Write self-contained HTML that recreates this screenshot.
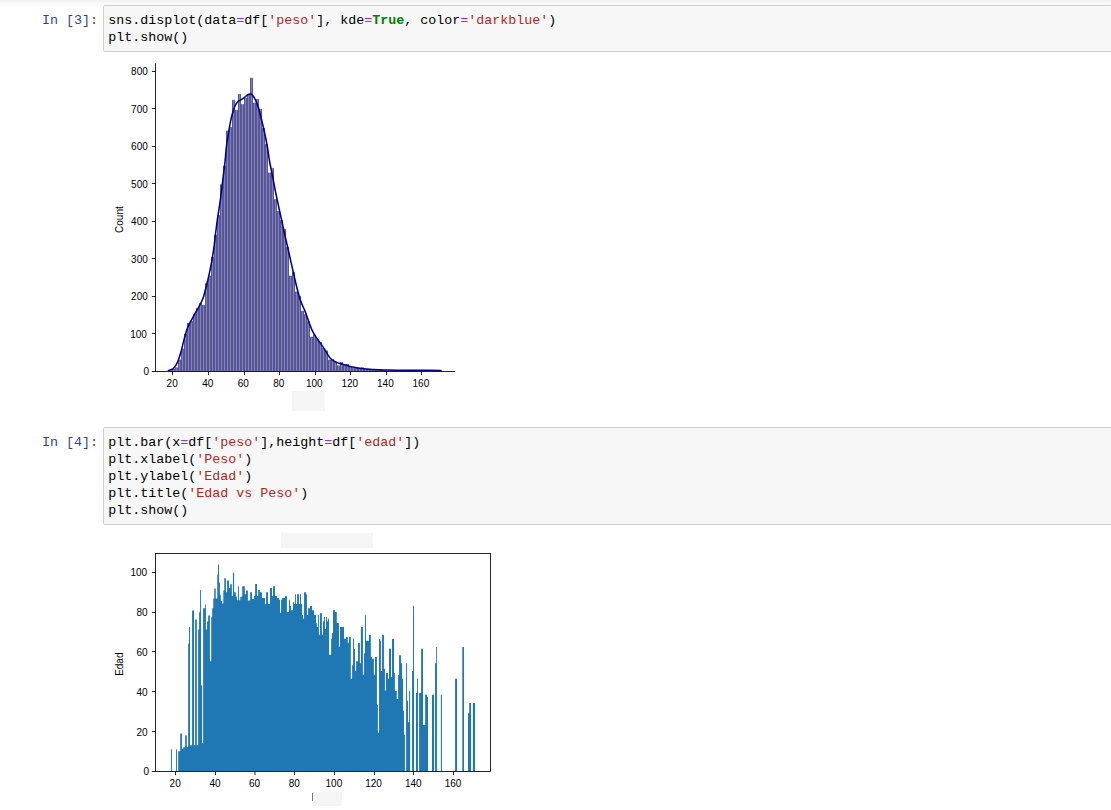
<!DOCTYPE html>
<html><head><meta charset="utf-8"><title>notebook</title>
<style>
html,body{margin:0;padding:0;background:#fff;}
body{width:1111px;height:810px;position:relative;overflow:hidden;font-family:"Liberation Sans",sans-serif;}
.box{position:absolute;left:103px;width:1100px;box-sizing:border-box;border:1px solid #cfcfcf;border-radius:2px;background:#f7f7f7;}
.box pre,.prompt{font-family:"Liberation Mono",monospace;font-size:13.33px;line-height:17px;margin:0;}
.box pre{position:absolute;left:4.3px;top:5.5px;color:#000;white-space:pre;}
.prompt{position:absolute;left:0;width:98px;text-align:right;color:#303f9f;white-space:pre;}
.s{color:#ba2121}.o{color:#aa22ff}.k{color:#008000;font-weight:bold}
.g{position:absolute;background:#f5f5f5;}
svg{position:absolute;left:0;top:0;}
svg text{font-family:"Liberation Sans","DejaVu Sans",sans-serif;font-size:10px;fill:#000;}
</style></head><body>
<div style="position:absolute;left:0;top:0;width:1111px;height:8px;background:linear-gradient(#f0f0f0,#f6f6f6 25%,#fbfbfb 60%,#fff)"></div>
<div class="prompt" style="top:11.5px">In [3]:</div><div class="box" style="top:5px;height:47px"><pre>sns.displot(data<span class="o">=</span>df[<span class="s">'peso'</span>], kde<span class="o">=</span><span class="k">True</span>, color<span class="o">=</span><span class="s">'darkblue'</span>)
plt.show()</pre></div>
<div class="prompt" style="top:433.5px">In [4]:</div><div class="box" style="top:427px;height:98px"><pre>plt.bar(x<span class="o">=</span>df[<span class="s">'peso'</span>],height<span class="o">=</span>df[<span class="s">'edad'</span>])
plt.xlabel(<span class="s">'Peso'</span>)
plt.ylabel(<span class="s">'Edad'</span>)
plt.title(<span class="s">'Edad vs Peso'</span>)
plt.show()</pre></div>
<div class="g" style="left:292px;top:391px;width:33.3px;height:20.2px"></div>
<div class="g" style="left:281.4px;top:532.6px;width:91.4px;height:15.1px"></div>
<div class="g" style="left:312.7px;top:791.8px;width:29.5px;height:14.5px"></div>
<div style="position:absolute;left:312px;top:793px;width:1px;height:7.6px;background:#777"></div>
<svg width="1111" height="810" viewBox="0 0 1111 810">
<path d="M169.0 371.20V370.40H172.0V371.20ZM172.0 371.20V369.30H175.0V371.20ZM175.0 371.20V367.80H178.0V371.20ZM178.0 371.20V359.90H181.0V371.20ZM181.0 371.20V349.00H184.0V371.20ZM184.0 371.20V334.20H187.0V371.20ZM187.0 371.20V323.30H190.0V371.20ZM190.0 371.20V321.30H193.0V371.20ZM193.0 371.20V314.40H196.0V371.20ZM196.0 371.20V308.40H199.0V371.20ZM199.0 371.20V303.50H202.0V371.20ZM202.0 371.20V305.30H205.0V371.20ZM205.0 371.20V283.50H208.0V371.20ZM208.0 371.20V276.10H211.0V371.20ZM211.0 371.20V257.30H214.0V371.20ZM214.0 371.20V235.20H217.0V371.20ZM217.0 371.20V215.40H220.0V371.20ZM220.0 371.20V184.80H223.0V371.20ZM223.0 371.20V166.00H226.0V371.20ZM226.0 371.20V131.00H229.0V371.20ZM229.0 371.20V127.50H232.0V371.20ZM232.0 371.20V100.20H235.0V371.20ZM235.0 371.20V110.20H238.0V371.20ZM238.0 371.20V94.30H241.0V371.20ZM241.0 371.20V104.40H244.0V371.20ZM244.0 371.20V98.30H247.0V371.20ZM247.0 371.20V95.30H250.0V371.20ZM250.0 371.20V78.20H253.0V371.20ZM253.0 371.20V103.10H256.0V371.20ZM256.0 371.20V99.60H259.0V371.20ZM259.0 371.20V109.30H262.0V371.20ZM262.0 371.20V128.60H265.0V371.20ZM265.0 371.20V144.40H268.0V371.20ZM268.0 371.20V172.90H271.0V371.20ZM271.0 371.20V168.40H274.0V371.20ZM274.0 371.20V199.60H277.0V371.20ZM277.0 371.20V211.50H280.0V371.20ZM280.0 371.20V220.40H283.0V371.20ZM283.0 371.20V229.30H286.0V371.20ZM286.0 371.20V247.40H289.0V371.20ZM289.0 371.20V276.10H292.0V371.20ZM292.0 371.20V272.40H295.0V371.20ZM295.0 371.20V291.90H298.0V371.20ZM298.0 371.20V296.40H301.0V371.20ZM301.0 371.20V311.20H304.0V371.20ZM304.0 371.20V314.70H307.0V371.20ZM307.0 371.20V321.80H310.0V371.20ZM310.0 371.20V337.10H313.0V371.20ZM313.0 371.20V335.10H316.0V371.20ZM316.0 371.20V339.60H319.0V371.20ZM319.0 371.20V342.60H322.0V371.20ZM322.0 371.20V348.50H325.0V371.20ZM325.0 371.20V351.00H328.0V371.20ZM328.0 371.20V359.90H331.0V371.20ZM331.0 371.20V359.40H334.0V371.20ZM334.0 371.20V361.90H337.0V371.20ZM337.0 371.20V365.80H340.0V371.20ZM340.0 371.20V362.60H343.0V371.20ZM343.0 371.20V365.30H346.0V371.20ZM346.0 371.20V364.60H349.0V371.20ZM349.0 371.20V366.50H352.0V371.20ZM352.0 371.20V368.50H355.0V371.20ZM355.0 371.20V367.80H358.0V371.20ZM358.0 371.20V368.10H361.0V371.20ZM361.0 371.20V367.80H364.0V371.20ZM364.0 371.20V369.33H367.0V371.20ZM367.0 371.20V369.33H370.0V371.20ZM370.0 371.20V369.70H373.0V371.20ZM373.0 371.20V369.70H376.0V371.20ZM376.0 371.20V370.08H379.0V371.20ZM379.0 371.20V370.08H382.0V371.20ZM382.0 371.20V370.08H385.0V371.20ZM385.0 371.20V370.45H388.0V371.20ZM388.0 371.20V370.45H391.0V371.20ZM391.0 371.20V370.45H394.0V371.20ZM394.0 371.20V370.45H397.0V371.20ZM397.0 371.20V370.83H400.0V371.20ZM400.0 371.20V370.83H403.0V371.20ZM403.0 371.20V370.45H406.0V371.20ZM406.0 371.20V370.83H409.0V371.20ZM409.0 371.20V370.83H412.0V371.20ZM412.0 371.20V370.83H415.0V371.20ZM415.0 371.20V370.83H418.0V371.20ZM421.0 371.20V370.83H424.0V371.20ZM424.0 371.20V370.83H427.0V371.20ZM433.0 371.20V370.83H436.0V371.20ZM439.0 371.20V370.83H442.0V371.20Z" fill="#8080c5"/>
<path d="M169 371.20V370.40H170V371.20ZM171 371.20V370.40H173V371.20ZM172 370.40V369.30H173V370.40ZM174 371.20V369.30H176V371.20ZM175 369.30V367.80H176V369.30ZM177 371.20V367.80H179V371.20ZM178 367.80V359.90H179V367.80ZM180 371.20V359.90H182V371.20ZM181 359.90V349.00H182V359.90ZM183 371.20V349.00H185V371.20ZM184 349.00V334.20H185V349.00ZM186 371.20V334.20H188V371.20ZM187 334.20V323.30H188V334.20ZM189 371.20V323.30H191V371.20ZM190 323.30V321.30H191V323.30ZM192 371.20V321.30H194V371.20ZM193 321.30V314.40H194V321.30ZM195 371.20V314.40H197V371.20ZM196 314.40V308.40H197V314.40ZM198 371.20V308.40H200V371.20ZM199 308.40V303.50H200V308.40ZM201 371.20V305.30H203V371.20ZM201 305.30V303.50H202V305.30ZM204 371.20V305.30H206V371.20ZM205 305.30V283.50H206V305.30ZM207 371.20V283.50H209V371.20ZM208 283.50V276.10H209V283.50ZM210 371.20V276.10H212V371.20ZM211 276.10V257.30H212V276.10ZM213 371.20V257.30H215V371.20ZM214 257.30V235.20H215V257.30ZM216 371.20V235.20H218V371.20ZM217 235.20V215.40H218V235.20ZM219 371.20V215.40H221V371.20ZM220 215.40V184.80H221V215.40ZM222 371.20V184.80H224V371.20ZM223 184.80V166.00H224V184.80ZM225 371.20V166.00H227V371.20ZM226 166.00V131.00H227V166.00ZM228 371.20V131.00H230V371.20ZM229 131.00V127.50H230V131.00ZM231 371.20V127.50H233V371.20ZM232 127.50V100.20H233V127.50ZM234 371.20V110.20H236V371.20ZM234 110.20V100.20H235V110.20ZM237 371.20V110.20H239V371.20ZM238 110.20V94.30H239V110.20ZM240 371.20V104.40H242V371.20ZM240 104.40V94.30H241V104.40ZM243 371.20V104.40H245V371.20ZM244 104.40V98.30H245V104.40ZM246 371.20V98.30H248V371.20ZM247 98.30V95.30H248V98.30ZM249 371.20V95.30H251V371.20ZM250 95.30V78.20H251V95.30ZM252 371.20V103.10H254V371.20ZM252 103.10V78.20H253V103.10ZM255 371.20V103.10H257V371.20ZM256 103.10V99.60H257V103.10ZM258 371.20V109.30H260V371.20ZM258 109.30V99.60H259V109.30ZM261 371.20V128.60H263V371.20ZM261 128.60V109.30H262V128.60ZM264 371.20V144.40H266V371.20ZM264 144.40V128.60H265V144.40ZM267 371.20V172.90H269V371.20ZM267 172.90V144.40H268V172.90ZM270 371.20V172.90H272V371.20ZM271 172.90V168.40H272V172.90ZM273 371.20V199.60H275V371.20ZM273 199.60V168.40H274V199.60ZM276 371.20V211.50H278V371.20ZM276 211.50V199.60H277V211.50ZM279 371.20V220.40H281V371.20ZM279 220.40V211.50H280V220.40ZM282 371.20V229.30H284V371.20ZM282 229.30V220.40H283V229.30ZM285 371.20V247.40H287V371.20ZM285 247.40V229.30H286V247.40ZM288 371.20V276.10H290V371.20ZM288 276.10V247.40H289V276.10ZM291 371.20V276.10H293V371.20ZM292 276.10V272.40H293V276.10ZM294 371.20V291.90H296V371.20ZM294 291.90V272.40H295V291.90ZM297 371.20V296.40H299V371.20ZM297 296.40V291.90H298V296.40ZM300 371.20V311.20H302V371.20ZM300 311.20V296.40H301V311.20ZM303 371.20V314.70H305V371.20ZM303 314.70V311.20H304V314.70ZM306 371.20V321.80H308V371.20ZM306 321.80V314.70H307V321.80ZM309 371.20V337.10H311V371.20ZM309 337.10V321.80H310V337.10ZM312 371.20V337.10H314V371.20ZM313 337.10V335.10H314V337.10ZM315 371.20V339.60H317V371.20ZM315 339.60V335.10H316V339.60ZM318 371.20V342.60H320V371.20ZM318 342.60V339.60H319V342.60ZM321 371.20V348.50H323V371.20ZM321 348.50V342.60H322V348.50ZM324 371.20V351.00H326V371.20ZM324 351.00V348.50H325V351.00ZM327 371.20V359.90H329V371.20ZM327 359.90V351.00H328V359.90ZM330 371.20V359.90H332V371.20ZM331 359.90V359.40H332V359.90ZM333 371.20V361.90H335V371.20ZM333 361.90V359.40H334V361.90ZM336 371.20V365.80H338V371.20ZM336 365.80V361.90H337V365.80ZM339 371.20V365.80H341V371.20ZM340 365.80V362.60H341V365.80ZM342 371.20V365.30H344V371.20ZM342 365.30V362.60H343V365.30ZM345 371.20V365.30H347V371.20ZM346 365.30V364.60H347V365.30ZM348 371.20V366.50H350V371.20ZM348 366.50V364.60H349V366.50ZM351 371.20V368.50H353V371.20ZM351 368.50V366.50H352V368.50ZM354 371.20V368.50H356V371.20ZM355 368.50V367.80H356V368.50ZM357 371.20V368.10H359V371.20ZM357 368.10V367.80H358V368.10ZM360 371.20V368.10H362V371.20ZM361 368.10V367.80H362V368.10ZM363 371.20V369.33H365V371.20ZM363 369.33V367.80H364V369.33ZM366 371.20V369.33H368V371.20ZM369 371.20V369.70H371V371.20ZM369 369.70V369.33H370V369.70ZM372 371.20V369.70H374V371.20ZM375 371.20V370.08H377V371.20ZM375 370.08V369.70H376V370.08ZM378 371.20V370.08H380V371.20ZM381 371.20V370.08H383V371.20ZM384 371.20V370.45H386V371.20ZM384 370.45V370.08H385V370.45ZM387 371.20V370.45H389V371.20ZM390 371.20V370.45H392V371.20ZM393 371.20V370.45H395V371.20ZM396 371.20V370.83H398V371.20ZM396 370.83V370.45H397V370.83ZM399 371.20V370.83H401V371.20ZM402 371.20V370.83H404V371.20ZM403 370.83V370.45H404V370.83ZM405 371.20V370.83H407V371.20ZM405 370.83V370.45H406V370.83ZM408 371.20V370.83H410V371.20ZM411 371.20V370.83H413V371.20ZM414 371.20V370.83H416V371.20ZM417 371.20V370.83H418V371.20ZM421 371.20V370.83H422V371.20ZM423 371.20V370.83H425V371.20ZM426 371.20V370.83H427V371.20ZM433 371.20V370.83H434V371.20ZM435 371.20V370.83H436V371.20ZM439 371.20V370.83H440V371.20ZM441 371.20V370.83H442V371.20Z" fill="#58588e"/>
<path d="M172.0 369.30H175.0M175.0 367.80H178.0M178.0 359.90H181.0M181.0 349.00H184.0M184.0 334.20H187.0M187.0 323.30H190.0M190.0 321.30H193.0M193.0 314.40H196.0M196.0 308.40H199.0M199.0 303.50H202.0M202.0 305.30H205.0M205.0 283.50H208.0M208.0 276.10H211.0M211.0 257.30H214.0M214.0 235.20H217.0M217.0 215.40H220.0M220.0 184.80H223.0M223.0 166.00H226.0M226.0 131.00H229.0M229.0 127.50H232.0M232.0 100.20H235.0M235.0 110.20H238.0M238.0 94.30H241.0M241.0 104.40H244.0M244.0 98.30H247.0M247.0 95.30H250.0M250.0 78.20H253.0M253.0 103.10H256.0M256.0 99.60H259.0M259.0 109.30H262.0M262.0 128.60H265.0M265.0 144.40H268.0M268.0 172.90H271.0M271.0 168.40H274.0M274.0 199.60H277.0M277.0 211.50H280.0M280.0 220.40H283.0M283.0 229.30H286.0M286.0 247.40H289.0M289.0 276.10H292.0M292.0 272.40H295.0M295.0 291.90H298.0M298.0 296.40H301.0M301.0 311.20H304.0M304.0 314.70H307.0M307.0 321.80H310.0M310.0 337.10H313.0M313.0 335.10H316.0M316.0 339.60H319.0M319.0 342.60H322.0M322.0 348.50H325.0M325.0 351.00H328.0M328.0 359.90H331.0M331.0 359.40H334.0M334.0 361.90H337.0M337.0 365.80H340.0M340.0 362.60H343.0M343.0 365.30H346.0M346.0 364.60H349.0M349.0 366.50H352.0M352.0 368.50H355.0M355.0 367.80H358.0M358.0 368.10H361.0M361.0 367.80H364.0M364.0 369.33H367.0M367.0 369.33H370.0M370.0 369.70H373.0M373.0 369.70H376.0M376.0 370.08H379.0M379.0 370.08H382.0M382.0 370.08H385.0" stroke="#58588e" stroke-width="0.6" fill="none"/>
<path d="M168.40 370.50C169.15 370.22 171.67 369.67 172.90 368.80C174.13 367.93 174.90 366.70 175.80 365.30C176.70 363.90 177.47 362.53 178.30 360.40C179.13 358.27 180.05 355.13 180.80 352.50C181.55 349.87 182.13 347.25 182.80 344.60C183.47 341.95 184.07 339.25 184.80 336.60C185.53 333.95 186.38 330.92 187.20 328.70C188.02 326.48 188.78 325.12 189.70 323.30C190.62 321.48 191.72 319.62 192.70 317.80C193.68 315.98 194.62 314.13 195.60 312.40C196.58 310.67 197.60 309.22 198.60 307.40C199.60 305.58 200.77 303.33 201.60 301.50C202.43 299.67 202.78 299.07 203.60 296.40C204.42 293.73 205.52 289.47 206.50 285.50C207.48 281.53 208.58 276.88 209.50 272.60C210.42 268.32 211.25 264.08 212.00 259.80C212.75 255.52 213.43 251.03 214.00 246.90C214.57 242.77 214.83 239.58 215.40 235.00C215.97 230.42 216.57 225.30 217.40 219.40C218.23 213.50 219.40 207.02 220.40 199.60C221.40 192.18 222.63 181.17 223.40 174.90C224.17 168.63 224.45 167.08 225.00 162.00C225.55 156.92 226.00 149.97 226.70 144.40C227.40 138.83 228.30 133.55 229.20 128.60C230.10 123.65 231.12 118.50 232.10 114.70C233.08 110.90 234.10 108.03 235.10 105.80C236.10 103.57 237.12 102.28 238.10 101.30C239.08 100.32 239.93 100.55 241.00 99.90C242.07 99.25 243.42 98.23 244.50 97.40C245.58 96.57 246.58 95.48 247.50 94.90C248.42 94.32 249.18 93.90 250.00 93.90C250.82 93.90 251.50 93.90 252.40 94.90C253.30 95.90 254.40 97.75 255.40 99.90C256.40 102.05 257.42 104.67 258.40 107.80C259.38 110.93 260.32 114.75 261.30 118.70C262.28 122.65 263.30 126.88 264.30 131.50C265.30 136.12 266.43 141.48 267.30 146.40C268.17 151.32 268.67 156.25 269.50 161.00C270.33 165.75 271.27 169.62 272.30 174.90C273.33 180.18 274.47 186.60 275.70 192.70C276.93 198.80 278.45 205.73 279.70 211.50C280.95 217.27 282.23 222.88 283.20 227.30C284.17 231.72 284.58 233.92 285.50 238.00C286.42 242.08 287.50 246.52 288.70 251.80C289.90 257.08 291.38 263.92 292.70 269.70C294.02 275.48 295.30 281.35 296.60 286.50C297.90 291.65 299.12 296.53 300.50 300.60C301.88 304.67 303.52 307.37 304.90 310.90C306.28 314.43 307.48 318.33 308.80 321.80C310.12 325.27 311.48 328.98 312.80 331.70C314.12 334.42 315.38 336.12 316.70 338.10C318.02 340.08 319.37 341.70 320.70 343.60C322.03 345.50 323.22 347.20 324.70 349.50C326.18 351.80 327.95 355.42 329.60 357.40C331.25 359.38 332.95 360.40 334.60 361.40C336.25 362.40 337.70 362.82 339.50 363.40C341.30 363.98 343.42 364.33 345.40 364.90C347.38 365.47 349.08 366.23 351.40 366.80C353.72 367.37 356.33 367.88 359.30 368.30C362.27 368.72 365.90 369.05 369.20 369.30C372.50 369.55 375.80 369.67 379.10 369.80C382.40 369.93 385.52 370.03 389.00 370.10C392.48 370.17 394.83 370.17 400.00 370.20C405.17 370.23 413.17 370.27 420.00 370.30C426.83 370.33 437.50 370.38 441.00 370.40" fill="none" stroke="#00008b" stroke-width="1.55" stroke-linejoin="round" stroke-linecap="round"/>
<path d="M155.50 63.20L155.50 371.90" stroke="#000" stroke-width="0.85" fill="none"/>
<path d="M155.10 371.50L455.00 371.50" stroke="#000" stroke-width="0.85" fill="none"/>
<path d="M172.50 371.50L172.50 375.10" stroke="#000" stroke-width="0.85" fill="none"/>
<text x="172.18" y="386.70" text-anchor="middle">20</text>
<path d="M208.50 371.50L208.50 375.10" stroke="#000" stroke-width="0.85" fill="none"/>
<text x="207.87" y="386.70" text-anchor="middle">40</text>
<path d="M244.50 371.50L244.50 375.10" stroke="#000" stroke-width="0.85" fill="none"/>
<text x="243.32" y="386.70" text-anchor="middle">60</text>
<path d="M279.50 371.50L279.50 375.10" stroke="#000" stroke-width="0.85" fill="none"/>
<text x="278.89" y="386.70" text-anchor="middle">80</text>
<path d="M315.50 371.50L315.50 375.10" stroke="#000" stroke-width="0.85" fill="none"/>
<text x="314.24" y="386.70" text-anchor="middle">100</text>
<path d="M350.50 371.50L350.50 375.10" stroke="#000" stroke-width="0.85" fill="none"/>
<text x="349.80" y="386.70" text-anchor="middle">120</text>
<path d="M386.50 371.50L386.50 375.10" stroke="#000" stroke-width="0.85" fill="none"/>
<text x="385.36" y="386.70" text-anchor="middle">140</text>
<path d="M421.50 371.50L421.50 375.10" stroke="#000" stroke-width="0.85" fill="none"/>
<text x="420.92" y="386.70" text-anchor="middle">160</text>
<path d="M151.90 371.50L155.50 371.50" stroke="#000" stroke-width="0.85" fill="none"/>
<text x="149.00" y="375.35" text-anchor="end">0</text>
<path d="M151.90 333.50L155.50 333.50" stroke="#000" stroke-width="0.85" fill="none"/>
<text x="146.90" y="337.86" text-anchor="end">100</text>
<path d="M151.90 296.50L155.50 296.50" stroke="#000" stroke-width="0.85" fill="none"/>
<text x="147.80" y="300.37" text-anchor="end">200</text>
<path d="M151.90 258.50L155.50 258.50" stroke="#000" stroke-width="0.85" fill="none"/>
<text x="147.80" y="262.88" text-anchor="end">300</text>
<path d="M151.90 221.50L155.50 221.50" stroke="#000" stroke-width="0.85" fill="none"/>
<text x="147.80" y="225.39" text-anchor="end">400</text>
<path d="M151.90 183.50L155.50 183.50" stroke="#000" stroke-width="0.85" fill="none"/>
<text x="147.80" y="187.90" text-anchor="end">500</text>
<path d="M151.90 146.50L155.50 146.50" stroke="#000" stroke-width="0.85" fill="none"/>
<text x="147.80" y="150.41" text-anchor="end">600</text>
<path d="M151.90 108.50L155.50 108.50" stroke="#000" stroke-width="0.85" fill="none"/>
<text x="147.80" y="112.92" text-anchor="end">700</text>
<path d="M151.90 71.50L155.50 71.50" stroke="#000" stroke-width="0.85" fill="none"/>
<text x="147.80" y="75.43" text-anchor="end">800</text>
<text transform="translate(122.75,219.60) rotate(-90)" text-anchor="middle">Count</text>
<path d="M170.91 771.25V749.35H171.89V771.25ZM176.05 771.25V749.35H176.96V771.25ZM178.17 771.25V751.34H180.21V771.25ZM180.21 771.25V733.42H181.95V771.25ZM181.95 771.25V748.75H183.23V771.25ZM183.23 771.25V747.36H185.12V771.25ZM185.12 771.25V735.41H186.79V771.25ZM186.79 771.25V746.96H188.15V771.25ZM188.15 771.25V643.43H189.05V771.25ZM189.05 771.25V627.10H190.04V771.25ZM190.04 771.25V745.17H192.08V771.25ZM192.08 771.25V610.38H194.04V771.25ZM194.04 771.25V745.17H195.10V771.25ZM195.10 771.25V619.54H196.84V771.25ZM196.84 771.25V745.17H198.13V771.25ZM198.13 771.25V629.49H199.11V771.25ZM199.11 771.25V612.37H200.09V771.25ZM200.09 771.25V590.07H201.00V771.25ZM201.00 771.25V685.24H202.13V771.25ZM202.13 771.25V743.18H203.12V771.25ZM203.12 771.25V608.19H205.16V771.25ZM205.16 771.25V604.40H205.91V771.25ZM205.91 771.25V629.49H207.05V771.25ZM207.05 771.25V621.53H208.18V771.25ZM208.18 771.25V615.55H209.92V771.25ZM209.92 771.25V661.15H211.21V771.25ZM211.21 771.25V617.35H212.19V771.25ZM212.19 771.25V608.19H213.25V771.25ZM213.25 771.25V598.43H214.23V771.25ZM214.23 771.25V588.48H215.74V771.25ZM215.74 771.25V598.43H217.26V771.25ZM217.26 771.25V574.54H218.01V771.25ZM218.01 771.25V564.39H218.99V771.25ZM218.99 771.25V582.50H219.90V771.25ZM219.90 771.25V594.65H220.81V771.25ZM220.81 771.25V601.02H222.17V771.25ZM222.17 771.25V603.61H223.30V771.25ZM223.30 771.25V590.47H224.29V771.25ZM224.29 771.25V578.32H225.95V771.25ZM225.95 771.25V592.26H227.08V771.25ZM227.08 771.25V580.51H228.97V771.25ZM228.97 771.25V588.08H230.11V771.25ZM230.11 771.25V584.30H231.85V771.25ZM231.85 771.25V596.04H232.91V771.25ZM232.91 771.25V572.55H234.12V771.25ZM234.12 771.25V592.26H235.78V771.25ZM235.78 771.25V596.44H236.91V771.25ZM236.91 771.25V600.22H238.05V771.25ZM238.05 771.25V586.29H238.96V771.25ZM238.96 771.25V600.22H240.32V771.25ZM240.32 771.25V596.64H242.21V771.25ZM242.21 771.25V586.29H244.85V771.25ZM244.85 771.25V594.25H245.99V771.25ZM245.99 771.25V590.47H247.88V771.25ZM247.88 771.25V600.42H250.15V771.25ZM250.15 771.25V592.26H252.04V771.25ZM252.04 771.25V599.03H254.00V771.25ZM254.00 771.25V596.04H255.13V771.25ZM255.13 771.25V584.10H257.02V771.25ZM257.02 771.25V596.04H258.16V771.25ZM258.16 771.25V590.07H259.90V771.25ZM259.90 771.25V592.26H261.94V771.25ZM261.94 771.25V598.03H264.96V771.25ZM264.96 771.25V604.01H266.10V771.25ZM266.10 771.25V592.26H267.99V771.25ZM267.99 771.25V604.01H270.03V771.25ZM270.03 771.25V588.08H271.99V771.25ZM271.99 771.25V596.04H273.05V771.25ZM273.05 771.25V586.29H275.02V771.25ZM275.02 771.25V596.04H277.06V771.25ZM277.06 771.25V598.03H278.95V771.25ZM278.95 771.25V599.82H280.08V771.25ZM280.08 771.25V612.77H281.07V771.25ZM281.07 771.25V599.82H282.13V771.25ZM282.13 771.25V598.03H285.00V771.25ZM285.00 771.25V596.04H286.89V771.25ZM286.89 771.25V611.97H288.93V771.25ZM288.93 771.25V599.82H289.91V771.25ZM289.91 771.25V606.00H291.05V771.25ZM291.05 771.25V610.18H292.94V771.25ZM292.94 771.25V602.21H294.07V771.25ZM294.07 771.25V604.01H295.06V771.25ZM295.06 771.25V594.25H295.96V771.25ZM295.96 771.25V604.01H297.10V771.25ZM297.10 771.25V594.25H298.99V771.25ZM298.99 771.25V604.01H299.97V771.25ZM299.97 771.25V594.25H301.03V771.25ZM301.03 771.25V604.01H302.01V771.25ZM302.01 771.25V614.96H302.99V771.25ZM302.99 771.25V618.74H304.05V771.25ZM304.05 771.25V592.26H306.02V771.25ZM306.02 771.25V594.25H306.93V771.25ZM306.93 771.25V614.96H308.06V771.25ZM308.06 771.25V608.19H309.95V771.25ZM309.95 771.25V606.00H312.07V771.25ZM312.07 771.25V610.18H314.11V771.25ZM314.11 771.25V614.96H316.00V771.25ZM316.00 771.25V623.32H316.91V771.25ZM316.91 771.25V627.10H317.89V771.25ZM317.89 771.25V614.96H318.87V771.25ZM318.87 771.25V634.67H319.93V771.25ZM319.93 771.25V613.16H321.90V771.25ZM321.90 771.25V634.67H322.96V771.25ZM322.96 771.25V621.13H323.94V771.25ZM323.94 771.25V616.95H324.92V771.25ZM324.92 771.25V629.09H325.98V771.25ZM325.98 771.25V616.95H326.96V771.25ZM326.96 771.25V621.13H327.95V771.25ZM327.95 771.25V618.74H329.00V771.25ZM329.00 771.25V654.78H331.12V771.25ZM331.12 771.25V638.85H331.88V771.25ZM331.88 771.25V633.07H333.01V771.25ZM333.01 771.25V610.18H335.05V771.25ZM335.05 771.25V611.97H336.79V771.25ZM336.79 771.25V622.92H338.00V771.25ZM338.00 771.25V622.92H338.95V771.25ZM338.95 771.25V646.81H340.00V771.25ZM340.00 771.25V627.10H344.01V771.25ZM344.01 771.25V638.85H345.90V771.25ZM345.90 771.25V637.06H347.79V771.25ZM347.79 771.25V642.63H348.93V771.25ZM348.93 771.25V637.06H350.82V771.25ZM350.82 771.25V678.87H352.10V771.25ZM352.10 771.25V665.33H353.08V771.25ZM353.08 771.25V638.85H354.07V771.25ZM354.07 771.25V649.00H354.97V771.25ZM354.97 771.25V670.90H356.11V771.25ZM356.11 771.25V661.15H358.00V771.25ZM358.00 771.25V643.03H359.89V771.25ZM359.89 771.25V663.14H360.87V771.25ZM360.87 771.25V627.10H362.91V771.25ZM362.91 771.25V674.69H364.05V771.25ZM364.05 771.25V653.18H364.96V771.25ZM364.96 771.25V615.16H365.94V771.25ZM365.94 771.25V640.64H368.96V771.25ZM368.96 771.25V635.07H370.85V771.25ZM370.85 771.25V656.97H371.99V771.25ZM371.99 771.25V658.76H373.88V771.25ZM373.88 771.25V674.69H375.01V771.25ZM375.01 771.25V656.97H376.00V771.25ZM376.00 771.25V656.97H376.91V771.25ZM376.91 771.25V704.95H377.89V771.25ZM377.89 771.25V732.82H379.02V771.25ZM379.02 771.25V639.05H380.16V771.25ZM380.16 771.25V640.84H380.91V771.25ZM380.91 771.25V670.90H382.05V771.25ZM382.05 771.25V634.87H383.94V771.25ZM383.94 771.25V669.11H384.92V771.25ZM384.92 771.25V690.61H385.98V771.25ZM385.98 771.25V672.89H387.95V771.25ZM387.95 771.25V678.87H389.00V771.25ZM389.00 771.25V648.80H390.97V771.25ZM390.97 771.25V677.08H392.03V771.25ZM392.03 771.25V639.05H393.99V771.25ZM393.99 771.25V672.89H394.90V771.25ZM394.90 771.25V691.01H396.79V771.25ZM396.79 771.25V698.98H398.08V771.25ZM398.08 771.25V675.08H399.06V771.25ZM399.06 771.25V655.17H400.95V771.25ZM400.95 771.25V663.14H402.08V771.25ZM402.08 771.25V678.87H403.07V771.25ZM403.07 771.25V710.72H403.98V771.25ZM403.98 771.25V734.81H404.96V771.25ZM406.09 771.25V663.14H407.00V771.25ZM407.00 771.25V700.77H407.98V771.25ZM407.98 771.25V722.27H409.12V771.25ZM409.12 771.25V691.01H410.10V771.25ZM412.07 771.25V670.90H413.05V771.25ZM413.05 771.25V605.80H414.03V771.25ZM416.00 771.25V693.00H417.06V771.25ZM417.06 771.25V678.87H417.96V771.25ZM419.10 771.25V693.00H421.14V771.25ZM421.14 771.25V648.80H423.03V771.25ZM423.03 771.25V725.06H425.15V771.25ZM425.15 771.25V694.80H427.04V771.25ZM427.04 771.25V696.99H428.02V771.25ZM432.03 771.25V694.80H434.07V771.25ZM435.05 771.25V663.14H436.11V771.25ZM436.11 771.25V647.01H436.94V771.25ZM440.87 771.25V694.80H441.93V771.25ZM455.09 771.25V678.87H457.05V771.25ZM462.30 771.25V647.01H464.00V771.25ZM468.00 771.25V713.31H469.20V771.25ZM469.20 771.25V702.96H471.00V771.25ZM472.90 771.25V702.96H475.00V771.25Z" fill="#1f77b4"/>
<rect x="155.5" y="553.5" width="335.00" height="218.00" fill="none" stroke="#000" stroke-width="0.85"/>
<path d="M175.50 771.50L175.50 775.10" stroke="#000" stroke-width="0.85" fill="none"/>
<text x="175.18" y="786.85" text-anchor="middle">20</text>
<path d="M215.50 771.50L215.50 775.10" stroke="#000" stroke-width="0.85" fill="none"/>
<text x="215.02" y="786.85" text-anchor="middle">40</text>
<path d="M255.00 771.50L255.00 775.10" stroke="#000" stroke-width="0.85" fill="none"/>
<text x="254.63" y="786.85" text-anchor="middle">60</text>
<path d="M294.50 771.50L294.50 775.10" stroke="#000" stroke-width="0.85" fill="none"/>
<text x="294.35" y="786.85" text-anchor="middle">80</text>
<path d="M334.50 771.50L334.50 775.10" stroke="#000" stroke-width="0.85" fill="none"/>
<text x="333.86" y="786.85" text-anchor="middle">100</text>
<path d="M374.50 771.50L374.50 775.10" stroke="#000" stroke-width="0.85" fill="none"/>
<text x="373.57" y="786.85" text-anchor="middle">120</text>
<path d="M413.50 771.50L413.50 775.10" stroke="#000" stroke-width="0.85" fill="none"/>
<text x="413.29" y="786.85" text-anchor="middle">140</text>
<path d="M453.50 771.50L453.50 775.10" stroke="#000" stroke-width="0.85" fill="none"/>
<text x="453.00" y="786.85" text-anchor="middle">160</text>
<path d="M151.90 771.50L155.50 771.50" stroke="#000" stroke-width="0.85" fill="none"/>
<text x="149.10" y="775.45" text-anchor="end">0</text>
<path d="M151.90 731.50L155.50 731.50" stroke="#000" stroke-width="0.85" fill="none"/>
<text x="147.60" y="735.63" text-anchor="end">20</text>
<path d="M151.90 691.50L155.50 691.50" stroke="#000" stroke-width="0.85" fill="none"/>
<text x="147.60" y="695.81" text-anchor="end">40</text>
<path d="M151.90 651.50L155.50 651.50" stroke="#000" stroke-width="0.85" fill="none"/>
<text x="147.60" y="655.99" text-anchor="end">60</text>
<path d="M151.90 612.50L155.50 612.50" stroke="#000" stroke-width="0.85" fill="none"/>
<text x="147.60" y="616.17" text-anchor="end">80</text>
<path d="M151.90 572.50L155.50 572.50" stroke="#000" stroke-width="0.85" fill="none"/>
<text x="147.20" y="576.35" text-anchor="end">100</text>
<text transform="translate(122.75,664.20) rotate(-90)" text-anchor="middle">Edad</text>
</svg>
</body></html>
